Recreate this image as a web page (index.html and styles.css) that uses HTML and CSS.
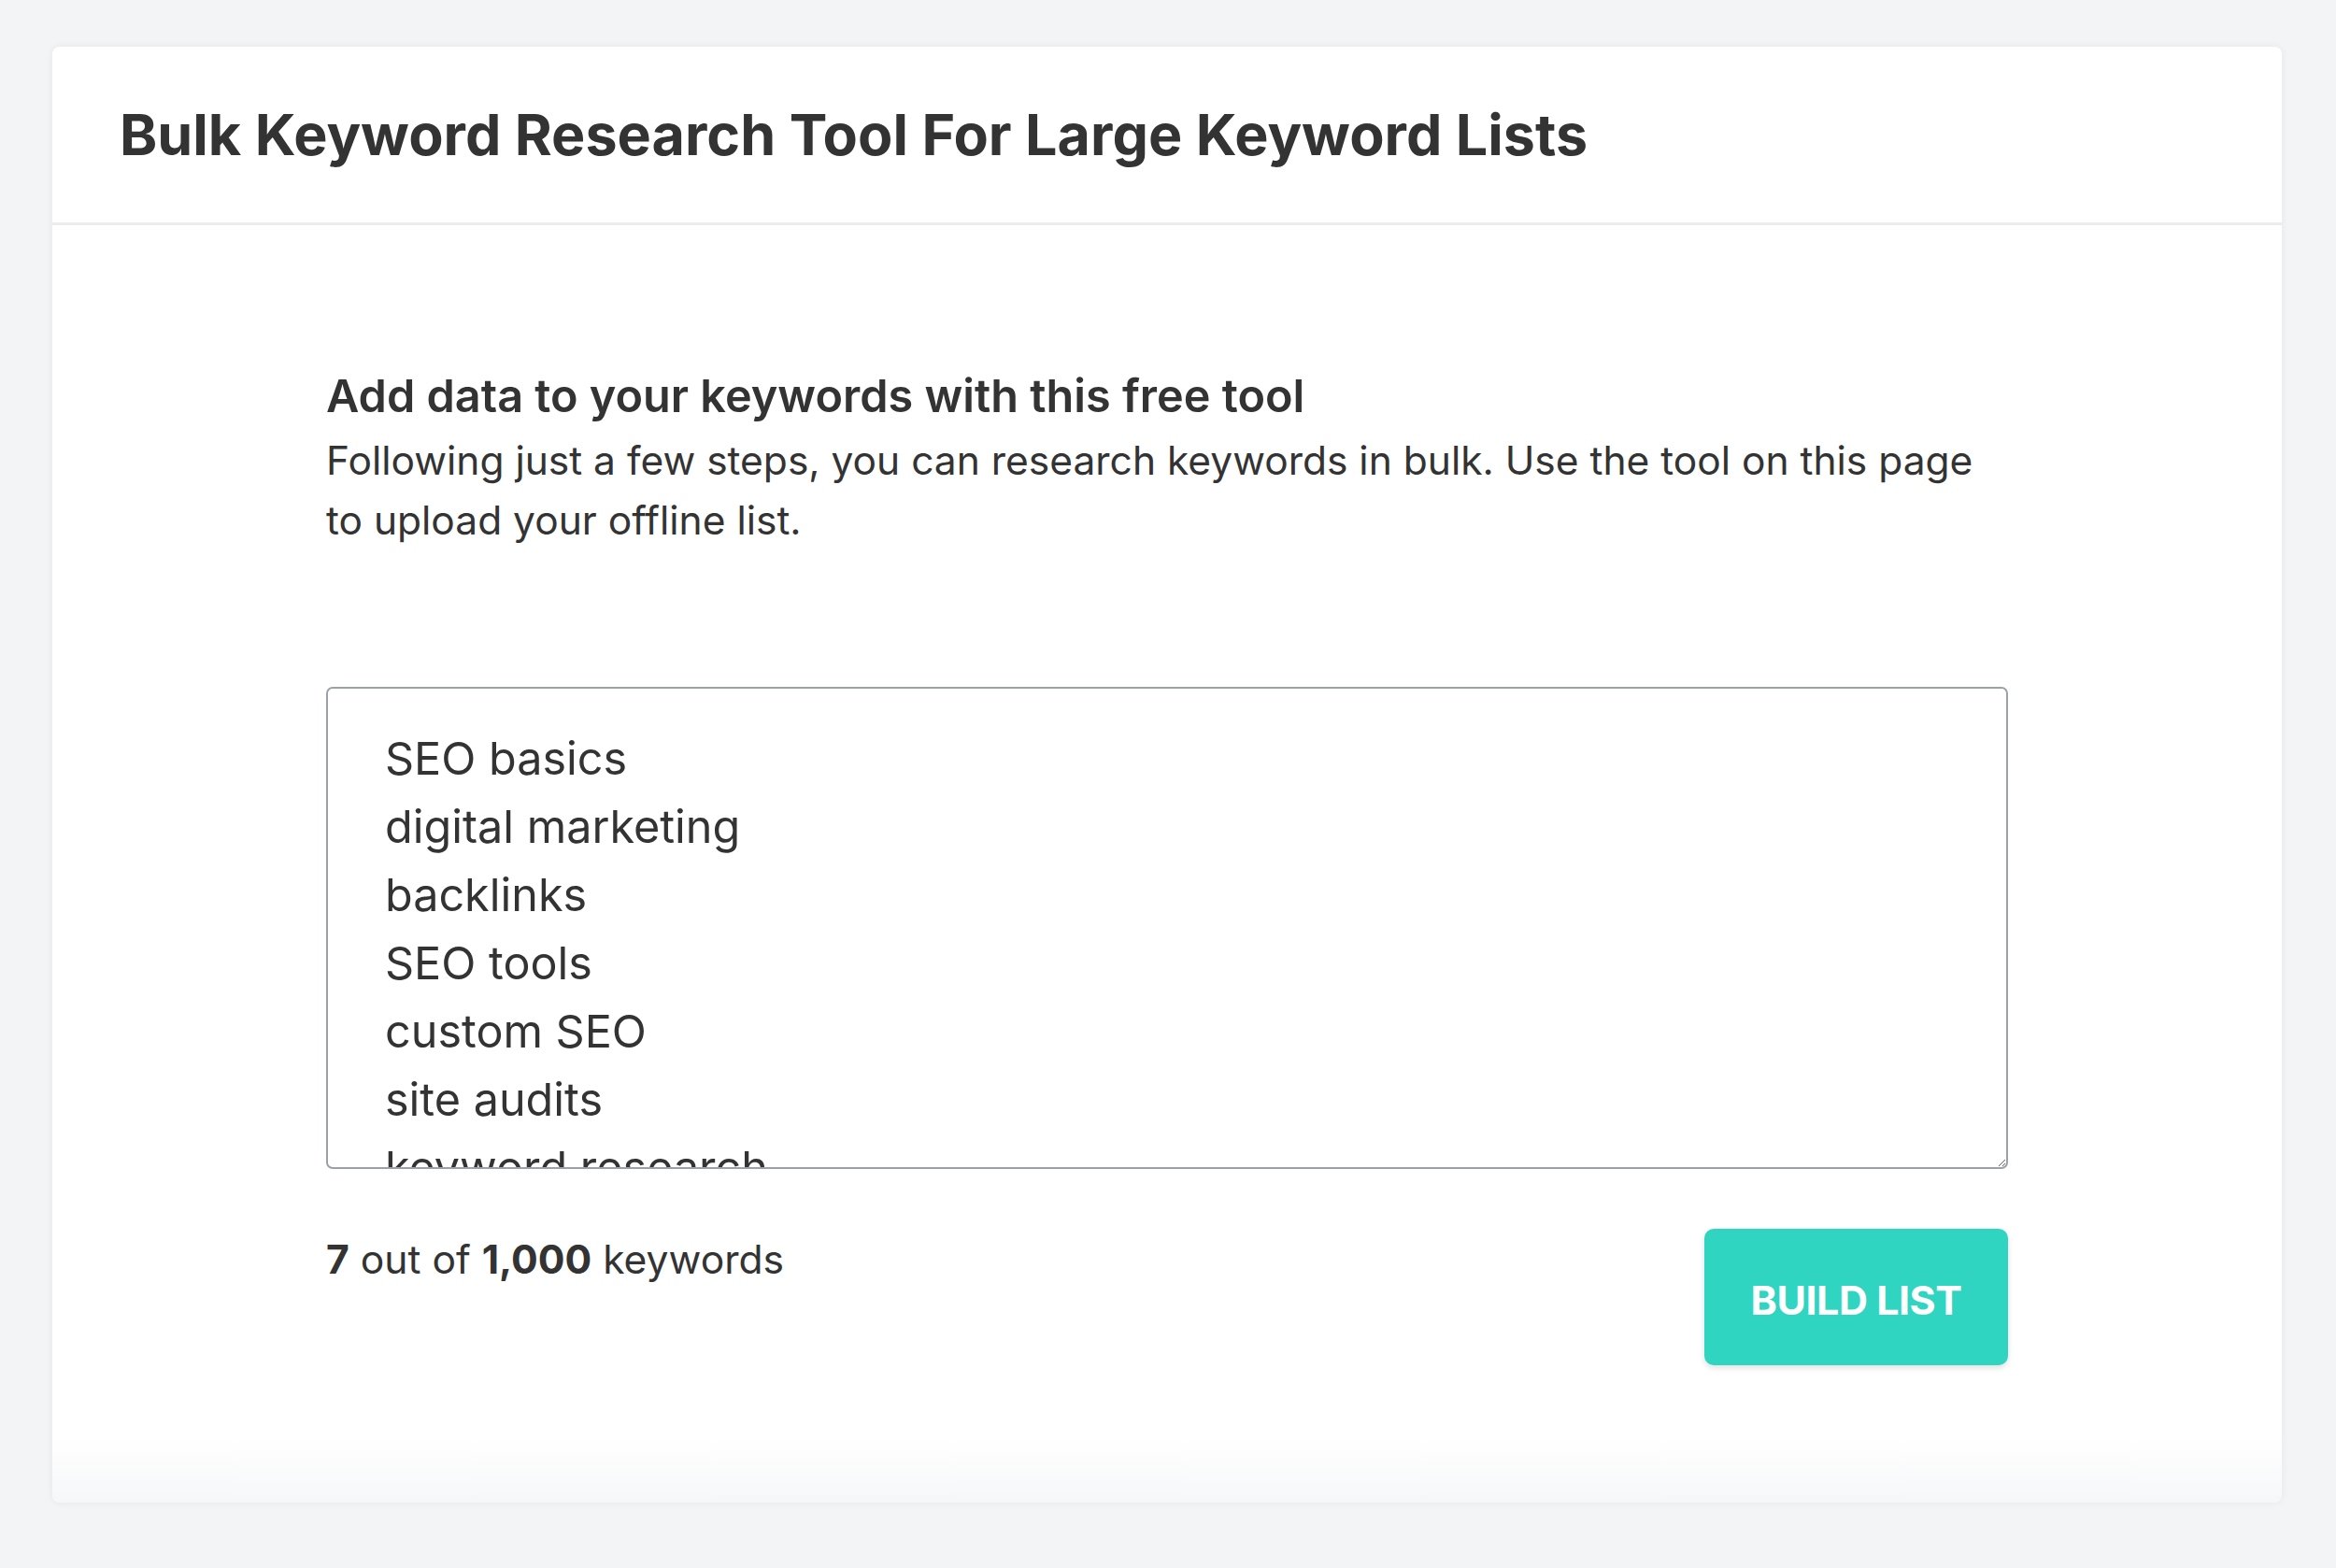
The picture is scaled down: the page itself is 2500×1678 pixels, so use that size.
FILE: index.html
```html
<!DOCTYPE html>
<html lang="en">
<head>
<meta charset="utf-8">
<title>Bulk Keyword Research Tool</title>
<link rel="stylesheet" href="styles.css">
</head>
<body>
<main class="card">
  <header class="card-header">
    <h1 class="card-title">Bulk Keyword Research Tool For Large Keyword Lists</h1>
  </header>
  <section class="card-body">
    <div class="tool">
      <h2 class="tool-title">Add data to your keywords with this free tool</h2>
      <p class="tool-desc">Following just a few steps, you can research keywords in bulk. Use the tool on this page to upload your offline list.</p>
      <textarea class="keywords" spellcheck="false">SEO basics
digital marketing
backlinks
SEO tools
custom SEO
site audits
keyword research</textarea>
      <div class="tool-footer">
        <div class="counter"><strong>7</strong> out of <strong>1,000</strong> keywords</div>
        <button class="build-btn" type="button">BUILD LIST</button>
      </div>
    </div>
  </section>
</main>
</body>
</html>
```

FILE: styles.css
```css
html, body {
  margin: 0;
  padding: 0;
}
body {
  background: #f3f4f6;
  font-family: Inter, "Noto Sans", "Liberation Sans", sans-serif;
  color: #333333;
  padding: 50px 58px 69px 56px;
  min-height: 1678px;
  box-sizing: border-box;
}
.card {
  display: block;
  background: linear-gradient(to bottom, #ffffff 0, #ffffff calc(100% - 70px), #f6f7f9 100%);
  border-radius: 8px;
  box-shadow: 0 0 8px rgba(0, 0, 0, 0.06);
}
.card-header {
  padding: 58px 72px;
  border-bottom: 3px solid #ebecee;
}
.card-title {
  margin: 0;
  font-size: 61px;
  line-height: 72px;
  font-weight: 700;
  letter-spacing: 0;
}
.card-body {
  padding: 152px 0 147px;
}
.tool {
  width: 1800px;
  margin: 0 auto;
}
.tool-title {
  margin: 0;
  font-size: 48.6px;
  line-height: 62px;
  font-weight: 600;
}
.tool-desc {
  margin: 6px 0 0;
  font-size: 42.5px;
  line-height: 64px;
  font-weight: 400;
  max-width: 1780px;
}
.keywords {
  display: block;
  box-sizing: border-box;
  width: 100%;
  height: 516px;
  margin-top: 146px;
  padding: 38px 60px 0 61px;
  border: 2.5px solid #9ca1a9;
  border-radius: 7px;
  font-family: Inter, "Noto Sans", "Liberation Sans", sans-serif;
  font-size: 48.5px;
  line-height: 73px;
  color: #333333;
  background: #ffffff;
  outline: none;
  overflow: hidden;
  resize: vertical;
}
.tool-footer {
  display: flex;
  justify-content: space-between;
  align-items: flex-start;
  margin-top: 64px;
}
.counter {
  font-size: 42.6px;
  line-height: 66px;
}
.counter strong {
  font-weight: 700;
}
.build-btn {
  width: 325px;
  height: 146px;
  padding: 6px 0 0;
  border: none;
  border-radius: 10px;
  background: #2fd5c0;
  color: #ffffff;
  font-family: Inter, "Noto Sans", "Liberation Sans", sans-serif;
  font-size: 43px;
  font-weight: 700;
  letter-spacing: -0.5px;
  box-shadow: 0 3px 6px rgba(0, 0, 0, 0.12);
  cursor: pointer;
}
```
